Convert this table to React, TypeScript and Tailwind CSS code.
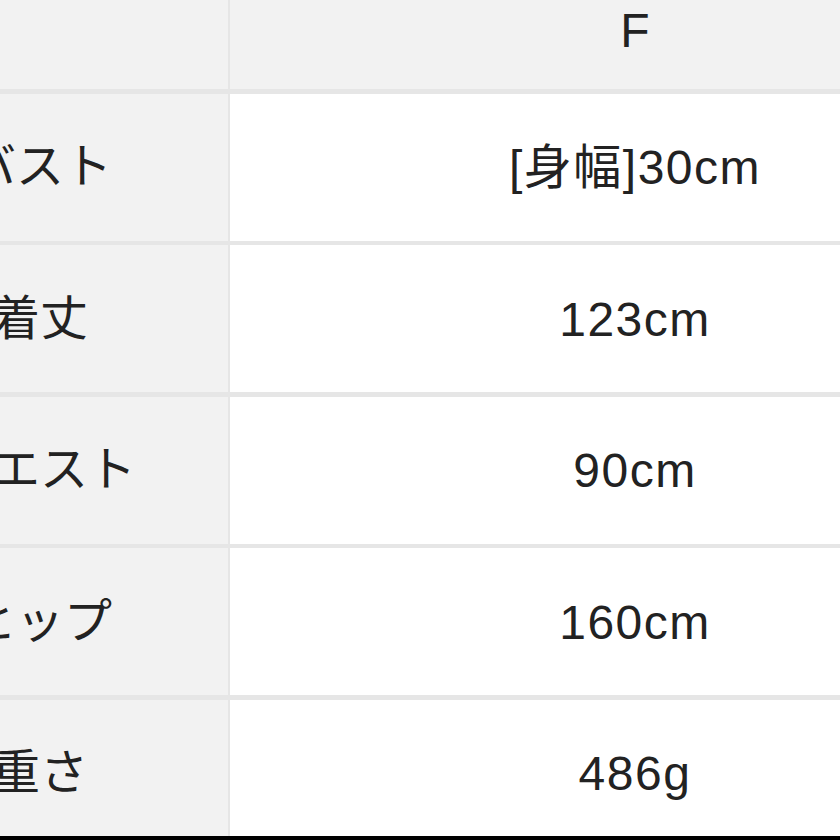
const rows = [
  { label: 'バスト', value: '[身幅]30cm' },
  { label: '着丈', value: '123cm' },
  { label: 'ウエスト', value: '90cm' },
  { label: 'ヒップ', value: '160cm' },
  { label: '重さ', value: '486g' },
];

export default function App() {
  return (
    <div className="w-[840px] h-[840px] bg-black flex flex-col">
      <div className="h-[836px] overflow-hidden bg-white">
        {/* table is cropped on the left and top, like the screenshot */}
        <div
          className="grid grid-cols-[376px_810px] gap-x-[2px] gap-y-[4.5px] bg-[#e6e6e6] ml-[-148px] mt-[-27px] text-[48px] text-[#222] leading-none"
          style={{ fontFamily: '"Liberation Sans", "Noto Sans CJK JP", sans-serif' }}
        >
          <div className="h-[116px] bg-[#f2f2f2]" />
          <div className="h-[116px] bg-[#f2f2f2] flex items-center justify-center">F</div>

          {rows.map((r) => (
            <div key={r.label} className="contents">
              <div className="h-[147px] bg-[#f2f2f2] flex items-center justify-center">{r.label}</div>
              <div className="h-[147px] bg-white flex items-center justify-center tracking-[1.5px] pt-[2px]">
                {r.value}
              </div>
            </div>
          ))}
        </div>
      </div>
    </div>
  );
}
